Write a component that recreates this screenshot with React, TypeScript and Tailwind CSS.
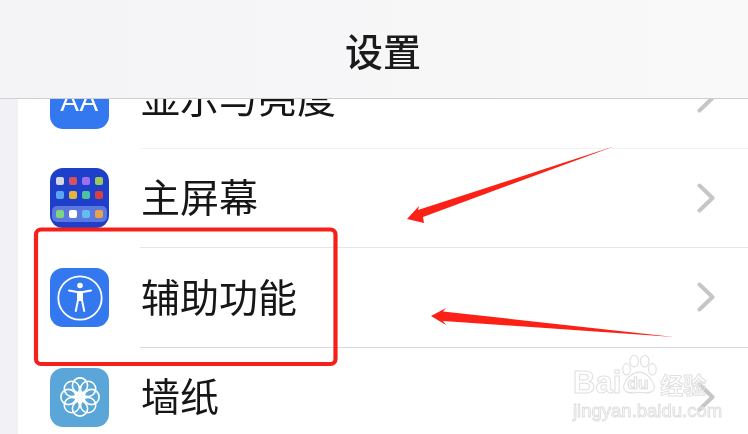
import React from 'react';

const FONT = "font-['Noto_Sans_CJK_SC','Noto_Sans',sans-serif]";

function Chevron() {
  return (
    <svg width="18" height="30" viewBox="0 0 18 30" fill="none" className="shrink-0">
      <path d="M2.5 2.5 L15.5 15 L2.5 27.5" stroke="#c6c6c8" strokeWidth="4" strokeLinecap="round" strokeLinejoin="round" />
    </svg>
  );
}

function HomeIcon() {
  const rows = [
    ['#d5d8e4', '#d9505f', '#a06cf0', '#9cc75c'],
    ['#5aa6f0', '#e3b53c', '#4fc0a0', '#d9403f'],
  ];
  const dock = ['#7fd67f', '#ffffff', '#62bdf0', '#e8a24c'];
  return (
    <div className="w-[59px] h-[60px] rounded-[13px] bg-[#1d3fc9] flex flex-col items-center pt-[9px]">
      {rows.map((colors, i) => (
        <div key={i} className="flex gap-[5px] mb-[6px]">
          {colors.map((c) => (
            <span key={c} className="w-[8px] h-[8px] rounded-[2px]" style={{ backgroundColor: c }} />
          ))}
        </div>
      ))}
      <div className="flex gap-[5px] px-[4px] py-[4px] mt-[1px] rounded-[5px] bg-[#5c78de]">
        {dock.map((c) => (
          <span key={c} className="w-[8px] h-[8px] rounded-[2px]" style={{ backgroundColor: c }} />
        ))}
      </div>
    </div>
  );
}

function AccessIcon() {
  return (
    <div className="w-[59px] h-[59px] rounded-[13px] bg-[#3478f0] flex items-center justify-center">
      <svg width="48" height="48" viewBox="0 0 48 48" fill="none">
        <circle cx="24" cy="24" r="21.7" stroke="white" strokeWidth="1.8" />
        <circle cx="24" cy="11.5" r="2.8" fill="white" />
        <path d="M13 16.5 L21 18 H27 L35 16.5" stroke="white" strokeWidth="2" strokeLinecap="round" strokeLinejoin="round" />
        <path d="M22 18 L22 26 L19.8 37 M26 18 L26 26 L28.2 37" stroke="white" strokeWidth="2" strokeLinecap="round" strokeLinejoin="round" />
        <path d="M22 18 H26 V27 H22 Z" fill="white" />
      </svg>
    </div>
  );
}

function FlowerIcon() {
  const angles = [0, 45, 90, 135, 180, 225, 270, 315];
  return (
    <div className="w-[59px] h-[59px] rounded-[13px] bg-[#5aa6d8] flex items-center justify-center">
      <svg width="44" height="44" viewBox="0 0 44 44" fill="none" stroke="white" strokeWidth="1.6">
        {angles.map((a) => (
          <circle key={a} cx="22" cy="10.5" r="7.6" transform={`rotate(${a} 22 22)`} />
        ))}
        {angles.map((a) => (
          <path key={a} d="M22 22 L22 15" transform={`rotate(${a} 22 22)`} />
        ))}
        <circle cx="22" cy="22" r="3" fill="white" stroke="none" />
      </svg>
    </div>
  );
}

function DisplayIcon() {
  return (
    <div className="w-[59px] h-[60px] rounded-[13px] bg-[#3478f0] flex items-center justify-center pt-[7px] text-white text-[28px] leading-none font-['Liberation_Sans',sans-serif] tracking-[0.5px]">
      AA
    </div>
  );
}

function Row({ icon, label, divider }: { icon: React.ReactNode; label: string; divider: string }) {
  return (
    <div className="h-[99.5px] flex items-center pl-[32px]">
      <div className="w-[59px] shrink-0">{icon}</div>
      <div className={`ml-[31px] flex-1 h-full flex items-center justify-between pr-[33px] border-b ${divider}`}>
        <span className={`text-[39px] leading-none text-[#161616] pl-[1px] pb-[4px] ${FONT}`}>{label}</span>
        <Chevron />
      </div>
    </div>
  );
}

function Watermark() {
  const outline = "text-transparent [-webkit-text-stroke:1px_#e0e0e0] font-['Liberation_Sans',sans-serif]";
  return (
    <div className="absolute left-[573px] top-[352px] w-[140px] z-20">
      <div className="flex items-end h-[46px]">
        <span className={`text-[31px] font-bold leading-none ${outline}`}>Bai</span>
        <svg width="42" height="44" viewBox="0 0 44 44" fill="none" stroke="#e0e0e0" strokeWidth="1.2" className="shrink-0 -ml-[3px]">
          <ellipse cx="9" cy="15" rx="4" ry="6" />
          <ellipse cx="17" cy="6.5" rx="4.5" ry="6" />
          <ellipse cx="28" cy="6.5" rx="4.5" ry="6" />
          <ellipse cx="36" cy="15" rx="4" ry="6" />
          <path d="M22 18 C29 18 36 25 38 32 C39 39 32 41 22 39 C12 41 5 39 6 32 C8 25 15 18 22 18 Z" />
          <text x="10" y="36" fontSize="18" fontWeight="700" fill="none" fontFamily="Liberation Sans">du</text>
        </svg>
        <span className={`text-[23px] font-bold leading-none mb-[2px] whitespace-nowrap text-transparent [-webkit-text-stroke:1px_#e0e0e0] ${FONT}`}>经验</span>
      </div>
      <div className={`text-[18.5px] leading-none mt-[4px] whitespace-nowrap ${outline}`}>jingyan.baidu.com</div>
    </div>
  );
}

function Annotations() {
  return (
    <svg width="748" height="434" viewBox="0 0 748 434" fill="none" className="absolute inset-0 z-20 pointer-events-none">
      <rect x="36" y="229.5" width="299.5" height="134.5" rx="5" stroke="#f5201a" strokeWidth="4.2" />
      <polygon points="615,146 423,217 424,223 407,219 419,206 418,210" fill="#fb2116" />
      <polygon points="674,337 443,321 446,325 431,316 446,308 443,311.5" fill="#fb2116" />
    </svg>
  );
}

export default function App() {
  return (
    <div className={`relative w-[748px] h-[434px] overflow-hidden bg-[#f1f1f6] blur-[0.4px] ${FONT}`}>
      <header className="relative z-10 h-[99px] flex items-center justify-center pl-[18px] border-b border-[#cfcfd1] bg-gradient-to-r from-[#f4f4f7] to-[#f9f9f9]">
        <h1 className="text-[38px] leading-none font-medium text-[#1b1b1b] pt-[1px]">设置</h1>
      </header>
      <main className="ml-[18px] -mt-[50px] bg-white">
        <Row icon={<DisplayIcon />} label="显示与亮度" divider="border-[#f3f3f5]" />
        <Row icon={<HomeIcon />} label="主屏幕" divider="border-[#e6e6e8]" />
        <Row icon={<AccessIcon />} label="辅助功能" divider="border-[#d9d9dc]" />
        <Row icon={<FlowerIcon />} label="墙纸" divider="border-[#e6e6e8]" />
      </main>
      <Annotations />
      <Watermark />
    </div>
  );
}
